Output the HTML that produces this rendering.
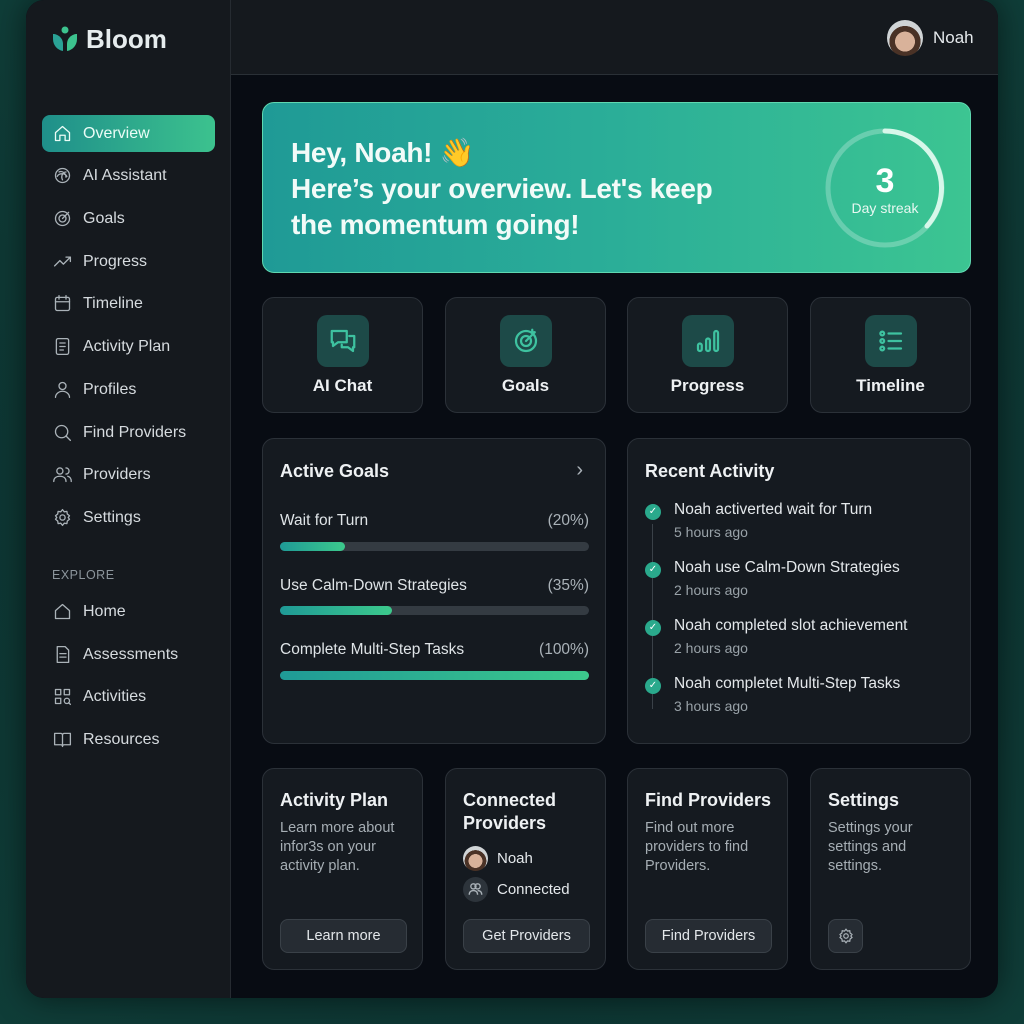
<!DOCTYPE html>
<html><head><meta charset="utf-8"><style>
*{box-sizing:border-box;margin:0;padding:0}
body{width:1024px;height:1024px;overflow:hidden;background:radial-gradient(ellipse at 50% 50%,#0b2a2b 0%,#0d3431 60%,#0f3d38 100%);font-family:"Liberation Sans",sans-serif;color:#e8ecef;position:relative}
.app{position:absolute;left:26px;top:0;width:972px;height:998px;border-radius:18px;background:#080c13;overflow:hidden;box-shadow:0 0 30px rgba(0,0,0,.5)}
.side{position:absolute;left:0;top:0;width:205px;height:998px;background:#15191e;border-right:1px solid #262b31}
.top{position:absolute;left:205px;top:0;right:0;height:75px;background:#15191e;border-bottom:1px solid #2a3036}
.logo{position:absolute;left:24px;top:24px;display:flex;align-items:center;font-size:26px;font-weight:bold;color:#e6ecee}
.nav{position:absolute;left:16px;width:173px;height:37px;display:flex;align-items:center;padding-left:10px;font-size:16px;color:#d6dbdf}
.nav svg{width:21px;height:21px;margin-right:10px;stroke:#aab2b8;fill:none;stroke-width:1.5;stroke-linecap:round;stroke-linejoin:round}
.nav.act{background:linear-gradient(90deg,#1f8f8a,#3cc28e);border-radius:8px;color:#eafcf6}
.nav.act svg{stroke:#eafcf6}
.exp{position:absolute;left:26px;top:568px;font-size:12.5px;color:#8c959c;letter-spacing:.5px}
.card{position:absolute;background:#151a20;border:1px solid #2b3138;border-radius:12px}
.hero{position:absolute;left:236px;top:102px;width:709px;height:171px;border-radius:12px;background:linear-gradient(90deg,#1f9a96 0%,#2bae98 50%,#3cc592 100%);border:1px solid #5fd8b0}
.hero h1{position:absolute;left:28px;top:32px;font-size:28px;line-height:36px;font-weight:bold;color:#f2fbf8;letter-spacing:-.3px}
.qc{top:297px;width:161px;height:116px}
.qi{position:absolute;left:54px;top:17px;width:52px;height:52px;border-radius:10px;background:#1d4a48;display:flex;align-items:center;justify-content:center}
.qi svg{width:30px;height:30px;stroke:#3ec2a0;fill:none;stroke-width:1.8;stroke-linecap:round;stroke-linejoin:round}
.ql{position:absolute;left:0;right:0;top:78px;text-align:center;font-size:17px;font-weight:bold;color:#eef1f3}
.ct{position:absolute;left:17px;top:22px;font-size:18px;font-weight:bold;color:#eef1f3}
.gl{position:absolute;left:17px;font-size:15.5px;color:#dfe4e7;width:309px}
.gl span{float:right;color:#aab2b8}
.bar{position:absolute;left:17px;width:309px;height:9px;border-radius:5px;background:#343b42}
.bar i{display:block;height:9px;border-radius:5px;background:linear-gradient(90deg,#1f9a96,#3cc98c)}
.ai{position:absolute;left:17px;width:300px}
.dot{position:absolute;left:0;top:3px;width:16px;height:16px;border-radius:50%;background:#2aa98c;color:#fff;font-size:10px;text-align:center;line-height:16px}
.at{position:absolute;left:29px;top:0;font-size:15.5px;color:#e4e8eb;white-space:nowrap}
.as{position:absolute;left:29px;top:23px;font-size:14px;color:#99a2a8;white-space:nowrap}
.bc{top:768px;width:161px;height:202px}
.bt{position:absolute;left:17px;top:20px;font-size:18px;font-weight:bold;color:#eef1f3;line-height:23px}
.bd{position:absolute;left:17px;font-size:14.5px;color:#a6aeb4;line-height:19px}
.btn{position:absolute;left:17px;top:150px;height:34px;border-radius:8px;background:#262c33;border:1px solid #3a4148;font-size:14.5px;color:#e3e7ea;display:flex;align-items:center;justify-content:center}
</style></head><body>
<div class="app">
<div class="side">
 <div class="logo"><svg width="30" height="30" viewBox="0 0 30 30"><circle cx="15" cy="5" r="3.5" fill="#3cc28e"/><path d="M3 9c5 0 10 4 10 10v7C7 25 3 20 3 14z" fill="#2aa296"/><path d="M27 9c-5 0-10 4-10 10v7c6-1 10-6 10-12z" fill="#3cc28e"/></svg><span style="margin-left:6px">Bloom</span></div>
 <div class="nav act" style="top:115px"><svg viewBox="0 0 24 24"><path d="M4 11l8-7 8 7v9h-5v-6h-6v6H4z"/></svg>Overview</div>
 <div class="nav" style="top:157px"><svg viewBox="0 0 24 24"><circle cx="12" cy="12" r="8"/><path d="M8 8c4-2 8 2 8 6M16 8c-4 0-6 5-4 9M6 13c2-4 9-4 11 0"/></svg>AI Assistant</div>
 <div class="nav" style="top:200px"><svg viewBox="0 0 24 24"><circle cx="12" cy="12" r="8"/><circle cx="12" cy="12" r="4"/><path d="M12 12l7-7"/></svg>Goals</div>
 <div class="nav" style="top:243px"><svg viewBox="0 0 24 24"><path d="M3 17l6-6 4 4 8-8M16 7h5v5"/></svg>Progress</div>
 <div class="nav" style="top:285px"><svg viewBox="0 0 24 24"><rect x="4" y="5" width="16" height="15" rx="2"/><path d="M4 10h16M8 3v4M16 3v4"/></svg>Timeline</div>
 <div class="nav" style="top:328px"><svg viewBox="0 0 24 24"><rect x="5" y="3" width="14" height="18" rx="2"/><path d="M9 8h6M9 12h6M9 16h4"/></svg>Activity Plan</div>
 <div class="nav" style="top:371px"><svg viewBox="0 0 24 24"><circle cx="12" cy="8" r="4"/><path d="M4 21c0-4 4-7 8-7s8 3 8 7"/></svg>Profiles</div>
 <div class="nav" style="top:414px"><svg viewBox="0 0 24 24"><circle cx="11" cy="11" r="7"/><path d="M16 16l5 5"/></svg>Find Providers</div>
 <div class="nav" style="top:456px"><svg viewBox="0 0 24 24"><circle cx="9" cy="8" r="3.5"/><path d="M2 20c0-4 3-6 7-6s7 2 7 6M16 4.5a3.5 3.5 0 010 7M18 14c2 .5 4 2 4 6"/></svg>Providers</div>
 <div class="nav" style="top:499px"><svg viewBox="0 0 24 24"><circle cx="12" cy="12" r="3"/><path d="M12 3l2 2.5 3-.5.5 3L20 10l-1.5 2 1.5 2-2.5 2-.5 3-3-.5L12 21l-2-2.5-3 .5-.5-3L4 14l1.5-2L4 10l2.5-2 .5-3 3 .5z"/></svg>Settings</div>
 <div class="exp">EXPLORE</div>
 <div class="nav" style="top:593px"><svg viewBox="0 0 24 24"><path d="M4 11l8-7 8 7v9H4z"/></svg>Home</div>
 <div class="nav" style="top:636px"><svg viewBox="0 0 24 24"><path d="M6 3h9l4 4v14H6z"/><path d="M9 11h7M9 15h7"/></svg>Assessments</div>
 <div class="nav" style="top:678px"><svg viewBox="0 0 24 24"><rect x="4" y="4" width="6" height="6"/><rect x="14" y="4" width="6" height="6"/><rect x="4" y="14" width="6" height="6"/><circle cx="17" cy="17" r="3"/><path d="M19 19l2 2"/></svg>Activities</div>
 <div class="nav" style="top:721px"><svg viewBox="0 0 24 24"><path d="M3 5h7a2 2 0 012 2v13a2 2 0 00-2-2H3zM21 5h-7a2 2 0 00-2 2v13a2 2 0 012-2h7z"/></svg>Resources</div>
</div>
<div class="top">
 <div style="position:absolute;left:656px;top:20px;width:36px;height:36px;border-radius:50%;background:radial-gradient(circle at 50% 60%,#d9b29a 0 35%,#4a3226 36% 55%,#d0d4d6 56%)"></div>
 <div style="position:absolute;left:702px;top:28px;font-size:17px;color:#e4e8eb">Noah</div>
</div>
<div class="hero">
 <h1>Hey, Noah! 👋<br>Here’s your overview. Let's keep<br>the momentum going!</h1>
 <svg style="position:absolute;left:560px;top:23px" width="124" height="124" viewBox="0 0 124 124"><circle cx="62" cy="62" r="57" stroke="rgba(255,255,255,.25)" stroke-width="5" fill="none"/><path d="M62 5A57 57 0 0 1 104 100" stroke="#d7f7ea" stroke-width="5" fill="none" stroke-linecap="round"/><text x="62" y="66" text-anchor="middle" font-family="Liberation Sans" font-weight="bold" font-size="34" fill="#fff">3</text><text x="62" y="87" text-anchor="middle" font-family="Liberation Sans" font-size="14" fill="#e8f8f2">Day streak</text></svg>
</div>
<div class="card qc" style="left:236px"><div class="qi"><svg viewBox="0 0 24 24"><path d="M3 4h12v9H8l-4 3v-3H3z"/><path d="M17 8h4v9h-1v3l-4-3h-5v-2"/></svg></div><div class="ql">AI Chat</div></div>
<div class="card qc" style="left:419px"><div class="qi"><svg viewBox="0 0 24 24"><circle cx="12" cy="12" r="8"/><circle cx="12" cy="12" r="4"/><path d="M12 12l7-7M17 3v2h2"/></svg></div><div class="ql">Goals</div></div>
<div class="card qc" style="left:601px"><div class="qi"><svg viewBox="0 0 24 24"><rect x="4" y="14" width="3" height="6" rx="1.5"/><rect x="10.5" y="10" width="3" height="10" rx="1.5"/><rect x="17" y="4" width="3" height="16" rx="1.5"/></svg></div><div class="ql">Progress</div></div>
<div class="card qc" style="left:784px"><div class="qi"><svg viewBox="0 0 24 24"><circle cx="5" cy="6" r="1.5"/><circle cx="5" cy="12" r="1.5"/><circle cx="5" cy="18" r="1.5"/><path d="M10 6h10M10 12h10M10 18h10"/></svg></div><div class="ql">Timeline</div></div>

<div class="card" style="left:236px;top:438px;width:344px;height:306px">
 <div class="ct">Active Goals</div>
 <div style="position:absolute;right:22px;top:20px;font-size:20px;color:#aab2b8">›</div>
 <div class="gl" style="top:73px">Wait for Turn<span>(20%)</span></div>
 <div class="bar" style="top:103px"><i style="width:65px"></i></div>
 <div class="gl" style="top:138px">Use Calm-Down Strategies<span>(35%)</span></div>
 <div class="bar" style="top:167px"><i style="width:112px"></i></div>
 <div class="gl" style="top:202px">Complete Multi-Step Tasks<span>(100%)</span></div>
 <div class="bar" style="top:232px"><i style="width:309px"></i></div>
</div>
<div class="card" style="left:601px;top:438px;width:344px;height:306px">
 <div class="ct">Recent Activity</div>
 <div style="position:absolute;left:24px;top:85px;width:1px;height:185px;background:#3a4148"></div>
 <div class="ai" style="top:62px"><div class="dot">✓</div><div class="at">Noah activerted wait for Turn</div><div class="as">5 hours ago</div></div>
 <div class="ai" style="top:120px"><div class="dot">✓</div><div class="at">Noah use Calm-Down Strategies</div><div class="as">2 hours ago</div></div>
 <div class="ai" style="top:178px"><div class="dot">✓</div><div class="at">Noah completed slot achievement</div><div class="as">2 hours ago</div></div>
 <div class="ai" style="top:236px"><div class="dot">✓</div><div class="at">Noah completet Multi-Step Tasks</div><div class="as">3 hours ago</div></div>
</div>

<div class="card bc" style="left:236px"><div class="bt">Activity Plan</div><div class="bd" style="top:50px">Learn more about<br>infor3s on your<br>activity plan.</div><div class="btn" style="width:127px">Learn more</div></div>
<div class="card bc" style="left:419px"><div class="bt">Connected<br>Providers</div>
 <div style="position:absolute;left:17px;top:77px;width:25px;height:25px;border-radius:50%;background:radial-gradient(circle at 50% 60%,#d9b29a 0 35%,#4a3226 36% 55%,#d0d4d6 56%)"></div>
 <div style="position:absolute;left:51px;top:81px;font-size:15px;color:#e4e8eb">Noah</div>
 <div style="position:absolute;left:17px;top:108px;width:25px;height:25px;border-radius:50%;background:#2d343b"><svg width="25" height="25" viewBox="0 0 24 24" fill="none" stroke="#aab2b8" stroke-width="1.3"><circle cx="10" cy="9" r="2.5"/><circle cx="14" cy="9" r="2.5"/><path d="M6 17c0-3 2-4 4-4s4 1 4 4M14 13c2 0 4 1 4 4"/></svg></div>
 <div style="position:absolute;left:51px;top:112px;font-size:15px;color:#e4e8eb">Connected</div>
 <div class="btn" style="width:127px">Get Providers</div></div>
<div class="card bc" style="left:601px"><div class="bt">Find Providers</div><div class="bd" style="top:50px">Find out more<br>providers to find<br>Providers.</div><div class="btn" style="width:127px">Find Providers</div></div>
<div class="card bc" style="left:784px"><div class="bt">Settings</div><div class="bd" style="top:50px">Settings your<br>settings and<br>settings.</div><div class="btn" style="width:35px"><svg width="18" height="18" viewBox="0 0 24 24" fill="none" stroke="#aab2b8" stroke-width="1.6"><circle cx="12" cy="12" r="3"/><path d="M12 3l2 2.5 3-.5.5 3L20 10l-1.5 2 1.5 2-2.5 2-.5 3-3-.5L12 21l-2-2.5-3 .5-.5-3L4 14l1.5-2L4 10l2.5-2 .5-3 3 .5z"/></svg></div></div>
</div>
</body></html>
